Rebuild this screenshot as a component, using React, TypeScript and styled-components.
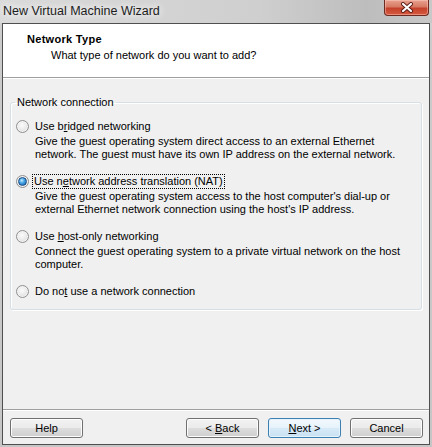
import React, { FC } from "react";
import styled, { createGlobalStyle } from "styled-components";

const GlobalStyle = createGlobalStyle`
  html, body {
    margin: 0;
    padding: 0;
    background: #c9c9c9;
  }
  * {
    box-sizing: border-box;
  }
`;

const Key = styled.span`
  text-decoration: underline;
`;

type Option = {
  id: string;
  label: React.ReactNode;
  lines: string[];
  checked?: boolean;
};

const options: Option[] = [
  {
    id: "bridged",
    label: (
      <>
        Use b<Key>r</Key>idged networking
      </>
    ),
    lines: [
      "Give the guest operating system direct access to an external Ethernet",
      "network. The guest must have its own IP address on the external network."
    ]
  },
  {
    id: "nat",
    checked: true,
    label: (
      <>
        Use n<Key>e</Key>twork address translation (NAT)
      </>
    ),
    lines: [
      "Give the guest operating system access to the host computer's dial-up or",
      "external Ethernet network connection using the host's IP address."
    ]
  },
  {
    id: "hostonly",
    label: (
      <>
        Use <Key>h</Key>ost-only networking
      </>
    ),
    lines: [
      "Connect the guest operating system to a private virtual network on the host",
      "computer."
    ]
  },
  {
    id: "none",
    label: (
      <>
        Do no<Key>t</Key> use a network connection
      </>
    ),
    lines: []
  }
];

const CloseGlyph: FC = () => (
  <svg width="14" height="11" viewBox="0 0 14 11">
    <path d="M3 2 L11 9 M11 2 L3 9" stroke="#5a1a14" strokeWidth="4" strokeLinecap="round" />
    <path d="M3 2 L11 9 M11 2 L3 9" stroke="#ffffff" strokeWidth="2.2" strokeLinecap="round" />
  </svg>
);

const App: FC = () => {
  return (
    <>
      <GlobalStyle />
      <Window>
        <TitleBar>
          <Caption>New Virtual Machine Wizard</Caption>
          <CloseButton>
            <CloseGlyph />
          </CloseButton>
        </TitleBar>
        <Client>
          <Header>
            <HeaderTitle>Network Type</HeaderTitle>
            <HeaderSubtitle>What type of network do you want to add?</HeaderSubtitle>
          </Header>
          <Etched />
          <Body>
            <GroupBox>
              <Legend>Network connection</Legend>
              <OptionList>
                {options.map((option) => (
                  <OptionItem key={option.id}>
                    <OptionRow>
                      <Radio $checked={option.checked} />
                      <OptionLabel $focused={option.checked}>{option.label}</OptionLabel>
                    </OptionRow>
                    {option.lines.length > 0 && (
                      <Description>
                        {option.lines.map((line) => (
                          <DescLine key={line}>{line}</DescLine>
                        ))}
                      </Description>
                    )}
                  </OptionItem>
                ))}
              </OptionList>
            </GroupBox>
          </Body>
          <Etched />
          <Footer>
            <Button>Help</Button>
            <Spacer />
            <Button>
              &lt; <Key>B</Key>ack
            </Button>
            <Button $default>
              <Key>N</Key>ext &gt;
            </Button>
            <Button>Cancel</Button>
          </Footer>
        </Client>
      </Window>
    </>
  );
};

export default App;

const Window = styled.div`
  width: 432px;
  height: 447px;
  display: flex;
  flex-direction: column;
  background: linear-gradient(to bottom, #d8d8d8 0%, #cbcbcb 40px, #c6c6c6 100%);
  font-family: "Liberation Sans", Arial, sans-serif;
  font-size: 11px;
  color: #000;
`;

const TitleBar = styled.div`
  height: 23px;
  display: flex;
  align-items: flex-start;
  padding: 0 3px 0 3px;
  background: linear-gradient(to right, #dadada 0%, #cfcfcf 60%, #bdbdbd 85%, #c8c8c8 100%);
`;

const Caption = styled.div`
  font-family: "Liberation Sans", Arial, sans-serif;
  font-size: 12.5px;
  line-height: 14px;
  padding-top: 4px;
  color: #1c1c1c;
  text-shadow: 0 0 6px #f4f4f4, 0 0 10px #ffffff;
`;

const CloseButton = styled.div`
  margin-left: auto;
  width: 45px;
  height: 16px;
  display: flex;
  align-items: center;
  justify-content: center;
  border: 1px solid #6e2a20;
  border-top: none;
  border-radius: 0 0 4px 4px;
  background: linear-gradient(to bottom, #e8a290 0%, #d77a64 45%, #c4412c 55%, #d65a3f 100%);
  box-shadow: inset 0 0 0 1px rgba(255, 210, 200, 0.45);
`;

const Client = styled.div`
  flex: 1;
  margin: 0 2px 2px 2px;
  border: 1px solid #4f4f4f;
  background: #f0f0f0;
  display: flex;
  flex-direction: column;
`;

const Header = styled.div`
  height: 53px;
  background: #ffffff;
  padding: 9px 0 0 24px;
`;

const HeaderTitle = styled.div`
  font-weight: bold;
  line-height: 13px;
  letter-spacing: 0.3px;
`;

const HeaderSubtitle = styled.div`
  line-height: 13px;
  margin: 3px 0 0 24px;
`;

const Etched = styled.div`
  height: 2px;
  border-top: 1px solid #a0a0a0;
  border-bottom: 1px solid #ffffff;
`;

const Body = styled.div`
  flex: 1;
  padding: 17px 7px 0 7px;
`;

const GroupBox = styled.fieldset`
  margin: 0;
  padding: 9px 0 10px 5px;
  border: 1px solid #d5dfe5;
  border-radius: 3px;
  box-shadow: inset 1px 1px 0 #ffffff, 1px 1px 0 #ffffff;
`;

const Legend = styled.legend`
  margin-left: -1px;
  padding: 0 2px;
  line-height: 13px;
`;

const OptionList = styled.div`
  display: flex;
  flex-direction: column;
  gap: 12px;
`;

const OptionItem = styled.div`
  display: flex;
  flex-direction: column;
`;

const OptionRow = styled.div`
  height: 16px;
  display: flex;
  align-items: center;
`;

const Radio = styled.span<{ $checked?: boolean }>`
  width: 13px;
  height: 13px;
  flex-shrink: 0;
  border-radius: 50%;
  border: 1px solid #8e8f8f;
  background: radial-gradient(circle at 45% 40%, #fbfbfb 0%, #ececec 45%, #cfcfcf 100%);
  box-shadow: inset 0 0 0 1px #f4f4f4;
  display: flex;
  align-items: center;
  justify-content: center;
  &::after {
    content: "";
    display: ${(p) => (p.$checked ? "block" : "none")};
    width: 7px;
    height: 7px;
    border-radius: 50%;
    border: 1px solid #1c4d86;
    background: radial-gradient(circle at 40% 35%, #c4ecff 0%, #49a6e6 40%, #0d5aa8 100%);
  }
`;

const OptionLabel = styled.span<{ $focused?: boolean }>`
  line-height: 13px;
  padding: 0 1px;
  margin-left: ${(p) => (p.$focused ? "3px" : "4px")};
  border: 1px dotted ${(p) => (p.$focused ? "#000" : "transparent")};
`;

const Description = styled.div`
  margin-left: 19px;
  padding-top: 1px;
`;

const DescLine = styled.div`
  line-height: 13px;
  white-space: nowrap;
`;

const Footer = styled.div`
  display: flex;
  align-items: flex-start;
  gap: 9px;
  padding: 7px 6px 6px 7px;
`;

const Spacer = styled.div`
  flex: 1;
`;

const Button = styled.button<{ $default?: boolean }>`
  width: 73px;
  height: 20px;
  padding: 0;
  font-family: "Liberation Sans", Arial, sans-serif;
  font-size: 11px;
  color: #000;
  border: 1px solid ${(p) => (p.$default ? "#3c7fb1" : "#707070")};
  border-radius: 3px;
  background: ${(p) =>
    p.$default
      ? "linear-gradient(to bottom, #f3f9fd 0%, #e6f2fa 49%, #d8eaf7 50%, #c9e1f3 100%)"
      : "linear-gradient(to bottom, #f2f2f2 0%, #ebebeb 49%, #dddddd 50%, #cfcfcf 100%)"};
  box-shadow: inset 0 0 0 1px ${(p) => (p.$default ? "#e4f3fc" : "#fcfcfc")};
`;
